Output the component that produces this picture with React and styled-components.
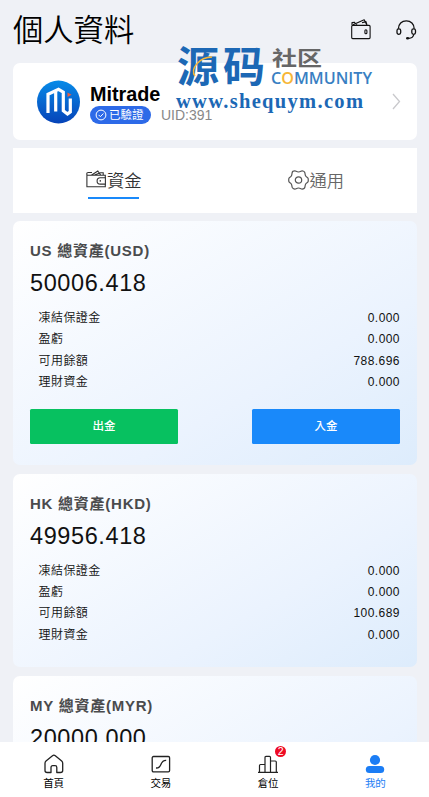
import React from 'react';
import styled, { createGlobalStyle } from 'styled-components';

const accounts = [
  {
    name: 'US 總資產(USD)',
    total: '50006.418',
    rows: [['凍結保證金', '0.000'], ['盈虧', '0.000'], ['可用餘額', '788.696'], ['理財資金', '0.000']],
    actions: true,
  },
  {
    name: 'HK 總資產(HKD)',
    total: '49956.418',
    rows: [['凍結保證金', '0.000'], ['盈虧', '0.000'], ['可用餘額', '100.689'], ['理財資金', '0.000']],
  },
  {
    name: 'MY 總資產(MYR)',
    total: '20000.000',
    rows: [],
  },
];

const WalletIcon = () => (
  <svg width="20" height="21" viewBox="0 0 20 21" fill="none" stroke="#111" strokeWidth="1.1" strokeLinejoin="round">
    <rect x="0.7" y="6.4" width="18.4" height="13.2" rx="1" />
    <path d="M1 6V3.6L4 3.3M2 5.8 13.2 .8 15.7 5.8M3.6 3.6 6 5.6M11 3.8 15 2.6 16 5.8" />
    <rect x="13.9" y="10.7" width="2" height="4" rx="1" />
  </svg>
);

const HeadsetIcon = () => (
  <svg width="21" height="21" viewBox="0 0 21 21" fill="none" stroke="#111" strokeWidth="1.3">
    <path d="M2.4 9.8C2.4 4.9 5.8 1.8 10.3 1.8s7.900 3.100 7.900 8" />
    <rect x="1" y="9.8" width="3.7" height="5.6" rx="1.8" />
    <rect x="15.8" y="9.8" width="3.7" height="5.6" rx="1.8" />
    <path d="M17.800 15.500c-.5 2.700-2.600 3.700-5.200 3.800" />
    <ellipse cx="11.6" cy="19.2" rx="1.6" ry="1.3" fill="#111" stroke="none" />
  </svg>
);

const FundsIcon = () => (
  <svg width="21" height="20" viewBox="0 0 21 20" fill="none" stroke="#333" strokeWidth="1.1">
    <path d="M19.3 8V5.3H2.2c-2 0-2-2.8 0-2.8H6M.9 4v12.7h18.4V14M5.3 5.2 11.8 1l3 4.2M8.500 5l6-2.300h2.700v2.500" />
    <path d="M19.4 7.700h-5.100a3.200 3.200 0 0 0 0 6.400h5.100z" />
    <circle cx="14.3" cy="10.9" r=".8" fill="#333" stroke="none" />
  </svg>
);

const GearIcon = () => (
  <svg width="21" height="20" viewBox="0 0 21 20" fill="none" stroke="#555" strokeWidth="1.2">
    <path
      d="M6.9.9c1 0 1.700 1.100 3.600 1.100S13.100.9 14.100.9s2.600 1 2.800 1.900c.2 1.200.1 2 .8 3.200s2.200 1.300 2.400 2.300.2 2.400 0 3.400-1.700 1.100-2.400 2.300-.6 2-.8 3.200-1.800 1.900-2.800 1.900-1.700-1.100-3.600-1.100-2.600 1.100-3.600 1.100-2.600-1-2.800-1.900c-.2-1.200-.1-2-.8-3.200s-2.200-1.300-2.400-2.300-.2-2.400 0-3.400S2.600 7.200 3.300 6s.6-2 .8-3.200S5.900.9 6.900.9z"
      strokeLinejoin="round"
    />
    <circle cx="10.5" cy="10" r="3.2" />
  </svg>
);

const BrandLogo = () => (
  <svg width="43" height="44" viewBox="0 0 43 44" fill="none">
    <defs>
      <linearGradient id="brand" x1="0" y1="0" x2="0" y2="1">
        <stop offset="0" stopColor="#078be8" />
        <stop offset="1" stopColor="#0643b8" />
      </linearGradient>
    </defs>
    <circle cx="21.5" cy="22" r="21.5" fill="url(#brand)" />
    <path d="M11 33V14.300l10.500-4.900 4.800 2.800v18.500l4.200 3.200 2.800-2V18.500M18.700 11v20.500" stroke="#fff" strokeWidth="3.2" />
    <path d="m30.500 12.500 4 2.200-4 2.300z" fill="#ee5a3c" />
  </svg>
);

const CheckIcon = () => (
  <svg width="12" height="12" viewBox="0 0 12 12" fill="none" stroke="#fff">
    <circle cx="6" cy="6" r="4.9" />
    <path d="m3.600 5.900 1.800 1.800 3-3.200" />
  </svg>
);

const ArrowIcon = () => (
  <svg width="9" height="17" viewBox="0 0 9 17" fill="none" stroke="#c9c9cc" strokeWidth="1.3">
    <path d="m1 1 6.500 7.500L1 16" />
  </svg>
);

const HomeIcon = () => (
  <svg width="20" height="20" viewBox="0 0 20 20" fill="none" stroke="#222" strokeWidth="1.3" strokeLinejoin="round">
    <path d="M7 18.500H3.200C1.700 18.500 1 17.700 1 16.400V9.200c0-1 .3-1.600 1-2.200l6.500-5.300q1.400-1.100 2.800 0L17.700 7c.7.6 1 1.200 1 2.200v7.200c0 1.300-.7 2.100-2.200 2.100h-3.700v-5.100c0-1.100-.7-1.800-1.700-1.800H8.700c-1 0-1.700.7-1.700 1.800z" />
  </svg>
);

const TradeIcon = () => (
  <svg width="20" height="20" viewBox="0 0 20 20" fill="none" stroke="#222" strokeWidth="1.3">
    <rect x="1.2" y="2.5" width="17.4" height="15.3" rx="1.3" />
    <path d="M5 14c7 .5 3-8 10.200-7.700" />
  </svg>
);

const PositionIcon = () => (
  <svg width="20" height="20" viewBox="0 0 20 20" fill="none" stroke="#222" strokeWidth="1.2">
    <path d="M0 18.400h20M1.500 18v-6.500q0-1 1-1h4.200M7 18V3.500q0-1.100 1-1.100h3.500q1 0 1 1.100V18M12.700 7h4.600q1 0 1 1v10" />
  </svg>
);

const UserIcon = () => (
  <svg width="20" height="20" viewBox="0 0 20 20" fill="#1b7df5">
    <circle cx="10" cy="6" r="5.1" />
    <rect x=".8" y="12" width="18.4" height="7" rx="3.5" />
  </svg>
);

const CommunityMark = () => (
  <Mark width="200" height="80" viewBox="0 -4 200 80">
    <g fontFamily="'Noto Sans CJK SC', sans-serif" fontWeight="700">
      <text x="2" y="43" fontSize="42" textLength="88" fill="#1c68b5">源码</text>
      <text x="97" y="27" fontSize="20.5" textLength="50" lengthAdjust="spacingAndGlyphs" fill="#666">社区</text>
    </g>
    <path d="M20 37c-5-7 4-19 17-19" fill="none" stroke="#f6b637" strokeWidth="1.5" />
    <text x="96" y="45" fontSize="17" fontFamily="'Open Sans', sans-serif" fontWeight="600" textLength="101" lengthAdjust="spacingAndGlyphs" fill="#397fc3">
      C<tspan fill="#f6b637">O</tspan>MMUNITY
    </text>
    <text x="1" y="69" fontSize="20.5" fontFamily="'Liberation Serif', serif" fontWeight="700" textLength="187" fill="#1c68b5">www.shequym.com</text>
  </Mark>
);

const tabs = [
  { label: '首頁', icon: <HomeIcon /> },
  { label: '交易', icon: <TradeIcon /> },
  { label: '倉位', icon: <PositionIcon />, badge: 2 },
  { label: '我的', icon: <UserIcon />, active: true },
];

class App extends React.Component {
  render() {
    return (
      <Page>
        <GlobalStyle />
        <Content>
          <Header>
            <h1>個人資料</h1>
            <HeaderIcons>
              <WalletIcon />
              <HeadsetIcon />
            </HeaderIcons>
          </Header>
          <Profile>
            <BrandLogo />
            <ProfileText>
              <h2>Mitrade</h2>
              <ProfileMeta>
                <Verified>
                  <CheckIcon />
                  已驗證
                </Verified>
                <Uid>UID:391</Uid>
              </ProfileMeta>
            </ProfileText>
            <ArrowIcon />
            <CommunityMark />
          </Profile>
          <Sections>
            <Section $active>
              <FundsIcon />
              資金
            </Section>
            <Section>
              <GearIcon />
              通用
            </Section>
          </Sections>
          {accounts.map(account => (
            <Account key={account.name}>
              <h3>{account.name}</h3>
              <Total>{account.total}</Total>
              <Rows>
                {account.rows.map(([label, value]) => (
                  <Row key={label}>
                    <span>{label}</span>
                    <span>{value}</span>
                  </Row>
                ))}
              </Rows>
              {account.actions && (
                <Actions>
                  <Button $color="#07c160">出金</Button>
                  <Button $color="#1989fa">入金</Button>
                </Actions>
              )}
            </Account>
          ))}
        </Content>
        <TabBar>
          {tabs.map(tab => (
            <Tab key={tab.label} $active={tab.active}>
              <TabIcon>
                {tab.icon}
                {tab.badge && <Badge>{tab.badge}</Badge>}
              </TabIcon>
              {tab.label}
            </Tab>
          ))}
        </TabBar>
      </Page>
    );
  }
}

const GlobalStyle = createGlobalStyle`
  * {
    box-sizing: border-box;
  }
  body {
    margin: 0;
    background: #eff1f6;
    color: #000;
    font-family: 'Liberation Sans', 'Noto Sans CJK TC', sans-serif;
  }
  h1, h2, h3 {
    margin: 0;
  }
  svg {
    display: block;
    flex: none;
  }
`;

const Page = styled.div`
  display: flex;
  flex-direction: column;
  height: 797px;
  overflow: hidden;
`;

const Content = styled.main`
  flex: 1;
  min-height: 0;
  overflow: hidden;
  padding: 0 12px 0 13px;
`;

const Header = styled.header`
  display: flex;
  justify-content: space-between;
  height: 63px;
  h1 {
    font-size: 30.3px;
    font-weight: 350;
    line-height: 62px;
  }
`;

const HeaderIcons = styled.div`
  display: flex;
  gap: 25px;
  padding-top: 19px;
`;

const Profile = styled.section`
  position: relative;
  display: flex;
  align-items: center;
  height: 77px;
  padding: 0 16px 0 24px;
  border-radius: 7px;
  background: #fff;
`;

const ProfileText = styled.div`
  flex: 1;
  padding-left: 10px;
  h2 {
    font-size: 19.8px;
    line-height: 24px;
    padding-top: 3px;
  }
`;

const ProfileMeta = styled.div`
  display: flex;
  align-items: center;
  gap: 10px;
  line-height: 18px;
`;

const Verified = styled.span`
  display: flex;
  align-items: center;
  gap: 2px;
  width: 61px;
  height: 18px;
  padding-left: 5px;
  border-radius: 9px;
  background: #2d6ae8;
  color: #fff;
  font-size: 11.5px;
`;

const Uid = styled.span`
  padding-bottom: 1px;
  color: #888;
  font-size: 14px;
`;

const Mark = styled.svg`
  position: absolute;
  left: 162px;
  top: -28px;
`;

const Sections = styled.nav`
  display: flex;
  justify-content: space-between;
  height: 65px;
  margin: 8px 0;
  padding: 0 73px;
  background: #fff;
`;

const Section = styled.div`
  display: flex;
  align-items: center;
  align-self: flex-start;
  height: 51px;
  padding-top: 12px;
  color: ${props => (props.$active ? '#333' : '#666')};
  font-size: 17.3px;
  font-weight: 350;
  background: ${props =>
    props.$active ? 'linear-gradient(#1989fa, #1989fa) 2px 100% / 51px 2px no-repeat' : 'none'};
`;

const Account = styled.section`
  min-height: 193.5px;
  margin-bottom: 9px;
  padding: 19px 17px 21.2px;
  border-radius: 7px;
  background: linear-gradient(150deg, #fff 0%, #ebf3fe 65%, #ddecfc 100%);
  h3 {
    color: #4a4b4d;
    font-size: 15px;
    letter-spacing: 0.75px;
    line-height: 22px;
  }
`;

const Total = styled.div`
  color: #111;
  font-size: 23.5px;
  letter-spacing: 0.6px;
  line-height: 42px;
`;

const Rows = styled.div`
  padding: 4px 0 0 8.5px;
`;

const Row = styled.div`
  display: flex;
  justify-content: space-between;
  color: #111;
  font-size: 12px;
  font-weight: 350;
  letter-spacing: 0.45px;
  line-height: 21.3px;
`;

const Actions = styled.div`
  display: flex;
  justify-content: space-between;
  padding-top: 15.5px;
`;

const Button = styled.button`
  width: 148px;
  height: 35px;
  padding: 0 0 2px;
  border: 0;
  border-radius: 1.5px;
  background: ${props => props.$color};
  color: #fff;
  font: 500 11.5px 'Noto Sans CJK TC', sans-serif;
`;

const TabBar = styled.nav`
  display: flex;
  height: 55px;
  background: #fff;
`;

const Tab = styled.div`
  flex: 1;
  display: flex;
  flex-direction: column;
  align-items: center;
  padding-top: 12px;
  color: ${props => (props.$active ? '#1b7df5' : '#000')};
  font-size: 10.5px;
  line-height: 18px;
`;

const TabIcon = styled.div`
  position: relative;
`;

const Badge = styled.span`
  position: absolute;
  left: 17px;
  top: -8px;
  width: 11px;
  height: 11px;
  border-radius: 50%;
  background: #ee0a24;
  color: #fff;
  font-size: 10.5px;
  line-height: 11px;
  text-align: center;
`;

export default App;
